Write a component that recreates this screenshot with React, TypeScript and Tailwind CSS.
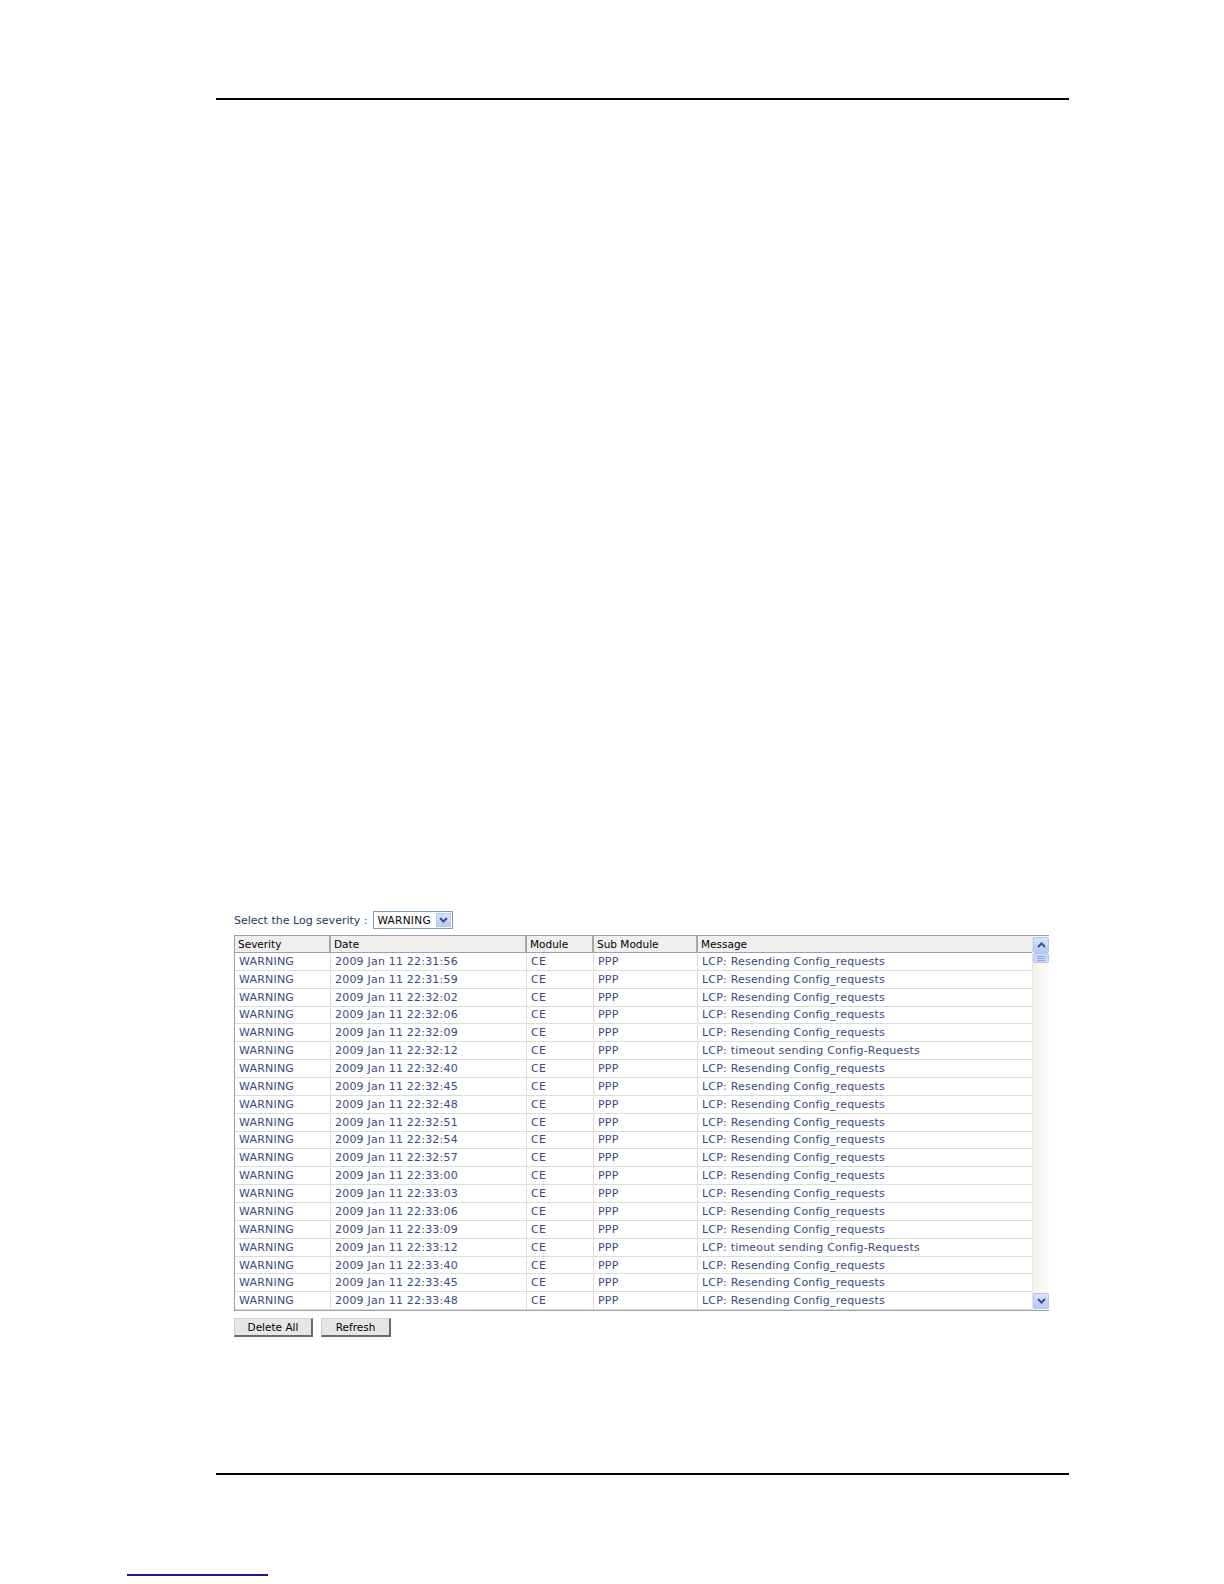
import React from 'react';

const rows: [string, string][] = [
  ['22:31:56', 'LCP: Resending Config_requests'],
  ['22:31:59', 'LCP: Resending Config_requests'],
  ['22:32:02', 'LCP: Resending Config_requests'],
  ['22:32:06', 'LCP: Resending Config_requests'],
  ['22:32:09', 'LCP: Resending Config_requests'],
  ['22:32:12', 'LCP: timeout sending Config-Requests'],
  ['22:32:40', 'LCP: Resending Config_requests'],
  ['22:32:45', 'LCP: Resending Config_requests'],
  ['22:32:48', 'LCP: Resending Config_requests'],
  ['22:32:51', 'LCP: Resending Config_requests'],
  ['22:32:54', 'LCP: Resending Config_requests'],
  ['22:32:57', 'LCP: Resending Config_requests'],
  ['22:33:00', 'LCP: Resending Config_requests'],
  ['22:33:03', 'LCP: Resending Config_requests'],
  ['22:33:06', 'LCP: Resending Config_requests'],
  ['22:33:09', 'LCP: Resending Config_requests'],
  ['22:33:12', 'LCP: timeout sending Config-Requests'],
  ['22:33:40', 'LCP: Resending Config_requests'],
  ['22:33:45', 'LCP: Resending Config_requests'],
  ['22:33:48', 'LCP: Resending Config_requests'],
];

const cols = ['w-[96px]', 'w-[196px]', 'w-[67px]', 'w-[104px]', 'w-[334px]'];
const headers = ['Severity', 'Date', 'Module', 'Sub Module', 'Message'];

const Arrow: React.FC<{ down?: boolean }> = ({ down }) => (
  <svg width="9" height="6" viewBox="0 0 9 6" className="block">
    <path
      d={down ? 'M1 1 L4.5 4.5 L8 1' : 'M1 5 L4.5 1.5 L8 5'}
      fill="none"
      stroke="#3c4f80"
      strokeWidth="2"
    />
  </svg>
);

const ScrollButton: React.FC<{ down?: boolean }> = ({ down }) => (
  <div className="w-[16px] h-[16px] mx-auto flex items-center justify-center rounded-[2px] border border-[#b4c6ef] bg-gradient-to-b from-[#d9e4fb] to-[#b6cbf5]">
    <Arrow down={down} />
  </div>
);

export default function App() {
  return (
    <div className="w-[1224px] h-[1584px] bg-white relative font-['DejaVu_Sans',Verdana,sans-serif]">
      <div className="pt-[98px] pl-[216px]">
        <div className="w-[853px] h-[2px] bg-black" />
      </div>

      <div className="pt-[811px] pl-[234px] text-[11px] leading-none">
        <div className="flex items-center gap-[5px] h-[18px]">
          <span className="text-[#1c3c5c]">Select the Log severity :</span>
          <div className="flex items-center h-[18px] w-[80px] border border-[#7f9db9] bg-white">
            <span className="flex-1 pl-[4px] text-[10.5px] text-black tracking-[0.3px]">WARNING</span>
            <div className="w-[15px] h-[14px] mr-[1px] flex items-center justify-center bg-gradient-to-b from-[#d9e4fb] to-[#b6cbf5] border border-[#b4c6ef]">
              <Arrow down />
            </div>
          </div>
        </div>

        <div className="mt-[6px] w-[815px] h-[376px] flex border border-[#a0a0a0]">
          <div className="flex-1 flex flex-col">
            <div className="flex h-[17px] bg-[#efefef] border-b border-[#a0a0a0]">
              {headers.map((h, i) => (
                <div
                  key={h}
                  className={`${cols[i]} ${i < 4 ? 'border-r-2 border-[#a8a8a8]' : ''} flex items-center pl-[3px] text-black text-[10.5px]`}
                >
                  {h}
                </div>
              ))}
            </div>
            {rows.map(([time, msg], r) => (
              <div key={r} className="flex h-[17.9px] border-b border-[#dcdcdc] text-[#3a4a7e]">
                {[
                  'WARNING',
                  `2009 Jan 11 ${time}`,
                  'CE',
                  'PPP',
                  msg,
                ].map((v, i) => (
                  <div
                    key={i}
                    className={`${cols[i]} ${i < 4 ? 'border-r border-[#dcdcdc]' : ''} flex items-center pl-[4px] tracking-[0.2px]`}
                  >
                    {v}
                  </div>
                ))}
              </div>
            ))}
          </div>
          <div className="w-[17px] flex flex-col bg-gradient-to-r from-[#f3f3ee] to-[#fbfbf8] border-l border-[#e6e6e0] pt-[1px] pb-[1px]">
            <ScrollButton />
            <div className="w-[16px] h-[10px] mx-auto flex flex-col justify-center gap-[1px] items-center rounded-[2px] border border-[#b4c6ef] bg-[#c9d8f7]">
              <div className="w-[8px] h-px bg-[#8ea6dc]" />
              <div className="w-[8px] h-px bg-[#8ea6dc]" />
              <div className="w-[8px] h-px bg-[#8ea6dc]" />
            </div>
            <div className="flex-1" />
            <ScrollButton down />
          </div>
        </div>

        <div className="mt-[7px] flex gap-[8px]">
          <button className="w-[79px] h-[19px] bg-[#e6e6e6] border border-[#d0d0d0] border-r-2 border-r-[#6a6a6a] border-b-2 border-b-[#6a6a6a] text-[10.5px] text-black">
            Delete All
          </button>
          <button className="w-[70px] h-[19px] bg-[#e6e6e6] border border-[#d0d0d0] border-r-2 border-r-[#6a6a6a] border-b-2 border-b-[#6a6a6a] text-[10.5px] text-black">
            Refresh
          </button>
        </div>
      </div>

      <div className="absolute left-[216px] top-[1473px] w-[853px] h-[2px] bg-black" />
      <div className="absolute left-[127px] top-[1574px] w-[141px] h-[2px] bg-[#1a1a8c]" />
    </div>
  );
}
